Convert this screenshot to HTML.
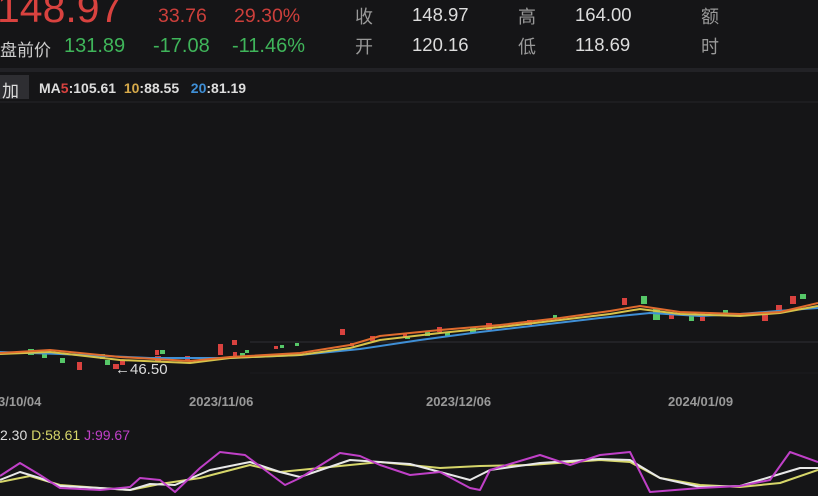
<!DOCTYPE html>
<html><head><meta charset="utf-8"><style>
html,body{margin:0;padding:0;background:#151517;width:818px;height:496px;overflow:hidden}
body{font-family:"Liberation Sans","Noto Sans CJK SC",sans-serif;position:relative}
.t{position:absolute;white-space:nowrap}
</style></head><body>
<div class="t" style="left:-3px;top:-15px;font-size:41px;color:#d9423f;">148.97</div>
<div class="t" style="left:158px;top:5px;font-size:19.5px;color:#cc3f3b">33.76</div>
<div class="t" style="left:234px;top:5px;font-size:19.5px;color:#cc3f3b">29.30%</div>
<div class="t" style="left:0;top:36px;font-size:17px;color:#ccc">盘前价</div>
<div class="t" style="left:64px;top:35px;font-size:20px;color:#3fb55a">131.89</div>
<div class="t" style="left:153px;top:35px;font-size:20px;color:#3fb55a">-17.08</div>
<div class="t" style="left:232px;top:35px;font-size:20px;color:#3fb55a">-11.46%</div>
<div class="t" style="left:355px;top:3px;font-size:18px;color:#999">收</div>
<div class="t" style="left:412px;top:4px;font-size:18.5px;color:#ddd">148.97</div>
<div class="t" style="left:518px;top:3px;font-size:18px;color:#999">高</div>
<div class="t" style="left:575px;top:4px;font-size:18.5px;color:#ddd">164.00</div>
<div class="t" style="left:701px;top:3px;font-size:18px;color:#999">额</div>
<div class="t" style="left:355px;top:33px;font-size:18px;color:#999">开</div>
<div class="t" style="left:412px;top:34px;font-size:18.5px;color:#ddd">120.16</div>
<div class="t" style="left:518px;top:33px;font-size:18px;color:#999">低</div>
<div class="t" style="left:575px;top:34px;font-size:18.5px;color:#ddd">118.69</div>
<div class="t" style="left:701px;top:33px;font-size:18px;color:#999">时</div>
<div style="position:absolute;left:0;top:68px;width:818px;height:4px;background:#222226"></div>
<div style="position:absolute;left:0;top:101px;width:818px;height:2px;background:#1d1d20"></div>
<div style="position:absolute;left:0;top:75px;width:29px;height:24px;background:#2e2e32"></div>
<div class="t" style="left:2px;top:77px;font-size:17px;color:#ddd">加</div>
<div class="t" style="left:39px;top:80px;font-size:14px;font-weight:bold;color:#ddd">MA<span style="color:#d9423f">5</span>:105.61 &nbsp;<span style="color:#d6a94a">10</span>:88.55 &nbsp;&nbsp;<span style="color:#3f8fd6">20</span>:81.19</div>
<svg style="position:absolute;left:0;top:0" width="818" height="496">
<line x1="250" y1="342" x2="818" y2="342" stroke="#222226" stroke-width="2"/>
<line x1="250" y1="373" x2="818" y2="373" stroke="#1c1c1f" stroke-width="1"/>
<g fill="#d9423f">
<rect x="120" y="360" width="5" height="5"/><rect x="77" y="362" width="5" height="8"/><rect x="155" y="350" width="4" height="5"/><rect x="218" y="350" width="5" height="5"/><rect x="233" y="352" width="4" height="4"/><rect x="350" y="343" width="4" height="3"/><rect x="370" y="336" width="5" height="5"/>
<rect x="218" y="344" width="5" height="6"/><rect x="232" y="340" width="5" height="5"/><rect x="274" y="346" width="4" height="3"/>
<rect x="340" y="329" width="5" height="6"/><rect x="486" y="323" width="6" height="7"/><rect x="403" y="333" width="4" height="4"/><rect x="527" y="320" width="5" height="5"/>
<rect x="437" y="327" width="5" height="5"/><rect x="622" y="298" width="5" height="7"/><rect x="669" y="314" width="5" height="5"/><rect x="700" y="312" width="5" height="9"/><rect x="762" y="315" width="6" height="6"/><rect x="776" y="305" width="6" height="6"/><rect x="790" y="296" width="6" height="8"/>
<rect x="155" y="356" width="6" height="6"/><rect x="185" y="356" width="5" height="5"/><rect x="113" y="364" width="6" height="5"/>
</g>
<g fill="#56c768">
<rect x="28" y="349" width="6" height="6"/><rect x="42" y="353" width="5" height="5"/><rect x="60" y="358" width="5" height="5"/><rect x="105" y="360" width="5" height="5"/>
<rect x="160" y="350" width="5" height="4"/><rect x="245" y="350" width="4" height="3"/><rect x="280" y="345" width="4" height="3"/><rect x="295" y="343" width="4" height="3"/>
<rect x="405" y="336" width="5" height="3"/><rect x="425" y="332" width="5" height="4"/><rect x="470" y="328" width="6" height="5"/><rect x="445" y="333" width="5" height="4"/>
<rect x="553" y="315" width="4" height="4"/><rect x="641" y="296" width="6" height="8"/><rect x="653" y="308" width="7" height="12"/><rect x="689" y="315" width="5" height="6"/><rect x="723" y="310" width="5" height="5"/><rect x="800" y="294" width="6" height="5"/>
<rect x="240" y="353" width="5" height="4"/><rect x="100" y="354" width="5" height="5"/>
</g>
<g fill="none" stroke-width="2" stroke-linejoin="round">
<polyline stroke="#3f8fd6" points="0,352 60,354 150,358 230,358 300,355 360,349 420,340 480,332 540,325 600,318 650,313 700,316 740,314 790,310 818,308"/>
<polyline stroke="#d6c24a" points="0,354 50,352 120,360 190,363 230,358 300,355 350,348 380,340 440,333 500,327 560,320 610,314 640,309 680,314 740,316 780,313 818,306"/>
<polyline stroke="#e06b2e" points="0,353 50,350 120,357 190,361 230,357 300,353 350,345 380,336 440,330 500,325 560,318 610,311 640,306 680,312 740,314 780,312 818,303"/>
</g>
<text x="115" y="374" fill="#ddd" font-size="15" font-family="Liberation Sans,sans-serif">←46.50</text>
<g fill="#999" font-size="13" font-weight="bold" font-family="Liberation Sans,sans-serif">
<text x="-2" y="406">3/10/04</text><text x="189" y="406">2023/11/06</text><text x="426" y="406">2023/12/06</text><text x="668" y="406">2024/01/09</text>
</g>
<text x="0" y="440" font-size="14" font-family="Liberation Sans,sans-serif"><tspan fill="#ddd">2.30 </tspan><tspan fill="#d6d66a">D:58.61 </tspan><tspan fill="#c040c8">J:99.67</tspan></text>
<g fill="none" stroke-width="2" stroke-linejoin="round">
<polyline stroke="#d6d66a" points="0,482 30,476 60,485 100,488 130,490 160,484 200,478 250,465 280,472 320,468 380,462 440,468 480,466 530,465 600,460 630,462 660,478 700,485 740,487 780,483 818,470"/>
<polyline stroke="#e8e8e8" points="0,480 20,472 40,478 60,486 100,488 130,490 150,484 175,485 210,470 250,462 280,472 300,477 350,460 380,462 410,464 440,472 470,480 490,470 540,463 600,459 630,460 660,478 700,487 740,486 780,474 800,468 818,468"/>
<polyline stroke="#c040c8" points="0,476 20,463 40,475 60,488 100,490 130,487 140,478 160,480 175,492 200,468 220,452 245,455 265,470 285,485 300,478 340,453 360,456 380,465 410,475 440,472 470,488 480,490 490,470 540,455 570,465 600,455 630,452 650,492 700,488 740,486 770,480 790,452 818,462"/>
</g>
</svg>
</body></html>
